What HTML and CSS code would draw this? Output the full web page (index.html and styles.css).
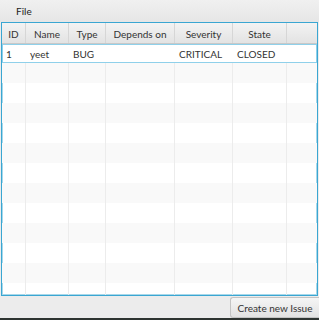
FILE: index.html
```html
<!DOCTYPE html>
<html>
<head>
<meta charset="utf-8">
<link rel="stylesheet" href="styles.css">
</head>
<body>
<div class="window">
  <div class="menubar"><span class="menu">File</span></div>
  <div class="table">
    <div class="row header">
      <div class="cell">ID</div>
      <div class="cell">Name</div>
      <div class="cell">Type</div>
      <div class="cell">Depends on</div>
      <div class="cell">Severity</div>
      <div class="cell">State</div>
      <div class="cell filler"></div>
    </div>
    <div class="body">
      <div class="row focused">
        <div class="cell">1</div>
        <div class="cell">yeet</div>
        <div class="cell">BUG</div>
        <div class="cell"></div>
        <div class="cell">CRITICAL</div>
        <div class="cell">CLOSED</div>
        <div class="cell filler"></div>
      </div>
      <div class="row odd"><div class="cell"></div><div class="cell"></div><div class="cell"></div><div class="cell"></div><div class="cell"></div><div class="cell"></div><div class="cell filler"></div></div>
      <div class="row"><div class="cell"></div><div class="cell"></div><div class="cell"></div><div class="cell"></div><div class="cell"></div><div class="cell"></div><div class="cell filler"></div></div>
      <div class="row odd"><div class="cell"></div><div class="cell"></div><div class="cell"></div><div class="cell"></div><div class="cell"></div><div class="cell"></div><div class="cell filler"></div></div>
      <div class="row"><div class="cell"></div><div class="cell"></div><div class="cell"></div><div class="cell"></div><div class="cell"></div><div class="cell"></div><div class="cell filler"></div></div>
      <div class="row odd"><div class="cell"></div><div class="cell"></div><div class="cell"></div><div class="cell"></div><div class="cell"></div><div class="cell"></div><div class="cell filler"></div></div>
      <div class="row"><div class="cell"></div><div class="cell"></div><div class="cell"></div><div class="cell"></div><div class="cell"></div><div class="cell"></div><div class="cell filler"></div></div>
      <div class="row odd"><div class="cell"></div><div class="cell"></div><div class="cell"></div><div class="cell"></div><div class="cell"></div><div class="cell"></div><div class="cell filler"></div></div>
      <div class="row"><div class="cell"></div><div class="cell"></div><div class="cell"></div><div class="cell"></div><div class="cell"></div><div class="cell"></div><div class="cell filler"></div></div>
      <div class="row odd"><div class="cell"></div><div class="cell"></div><div class="cell"></div><div class="cell"></div><div class="cell"></div><div class="cell"></div><div class="cell filler"></div></div>
      <div class="row"><div class="cell"></div><div class="cell"></div><div class="cell"></div><div class="cell"></div><div class="cell"></div><div class="cell"></div><div class="cell filler"></div></div>
      <div class="row odd"><div class="cell"></div><div class="cell"></div><div class="cell"></div><div class="cell"></div><div class="cell"></div><div class="cell"></div><div class="cell filler"></div></div>
      <div class="row"><div class="cell"></div><div class="cell"></div><div class="cell"></div><div class="cell"></div><div class="cell"></div><div class="cell"></div><div class="cell filler"></div></div>
    </div>
  </div>
  <div class="footer">
    <button class="btn">Create new Issue</button>
  </div>
  <div class="edge"></div>
</div>
</body>
</html>
```

FILE: styles.css
```css
html, body {
  margin: 0;
  padding: 0;
  background: #3a3f3d;
}
.window {
  width: 319px;
  height: 320px;
  display: flex;
  flex-direction: column;
  background: #ececec;
  font-family: "Lato", "DejaVu Sans", sans-serif;
  font-size: 10px;
  color: #333;
  overflow: hidden;
}
.menubar {
  height: 22px;
  flex: none;
  display: flex;
  align-items: center;
  background: linear-gradient(#f0f0f0, #e6e6e6);
}
.menu {
  margin-left: 16px;
  color: #222;
}
.table {
  flex: none;
  height: 272px;
  margin-left: 1px;
  width: 315px;
  border: 1px solid #3aa6d2;
  box-shadow: inset 0 0 0 1px #a8d8ea;
  background: #fff;
  display: flex;
  flex-direction: column;
  overflow: hidden;
}
.row {
  display: grid;
  grid-template-columns: 24px 43px 37px 69px 58px 54px 1fr;
  height: 20px;
  flex: none;
}
.cell {
  border-right: 1px solid #ececec;
  display: flex;
  align-items: center;
  padding-left: 4px;
  white-space: nowrap;
  overflow: hidden;
}
.cell.filler {
  border-right: none;
}
.header {
  height: 20px;
  background: linear-gradient(#f3f3f3, #e3e3e3);
  border-bottom: 1px solid #c8c8c8;
}
.header .cell {
  justify-content: center;
  padding-left: 0;
  padding-top: 1px;
  border-right: 1px solid #d6d6d6;
  color: #333;
}
.header .cell.filler {
  border-right: none;
}
.body {
  display: flex;
  flex-direction: column;
}
.row.odd {
  background: #f9f9f9;
}
.row.focused {
  box-shadow: inset 0 0 0 1px #8fd0ea;
  height: 19px;
}
.row.focused .cell {
  border-right-color: transparent;
}
.footer {
  flex: 1;
  display: flex;
  justify-content: flex-end;
  align-items: flex-start;
  padding-top: 1px;
  background: #ececec;
}
.btn {
  font-family: "Lato", "DejaVu Sans", sans-serif;
  font-size: 10px;
  color: #333;
  height: 21px;
  width: 89px;
  padding: 0;
  margin: 0;
  border: 1px solid #c4c4c4;
  border-right: none;
  border-radius: 3px 0 0 3px;
  background: linear-gradient(#f5f5f5, #e2e2e2);
}
.edge {
  height: 3px;
  flex: none;
  background: #2e3431;
}
```
